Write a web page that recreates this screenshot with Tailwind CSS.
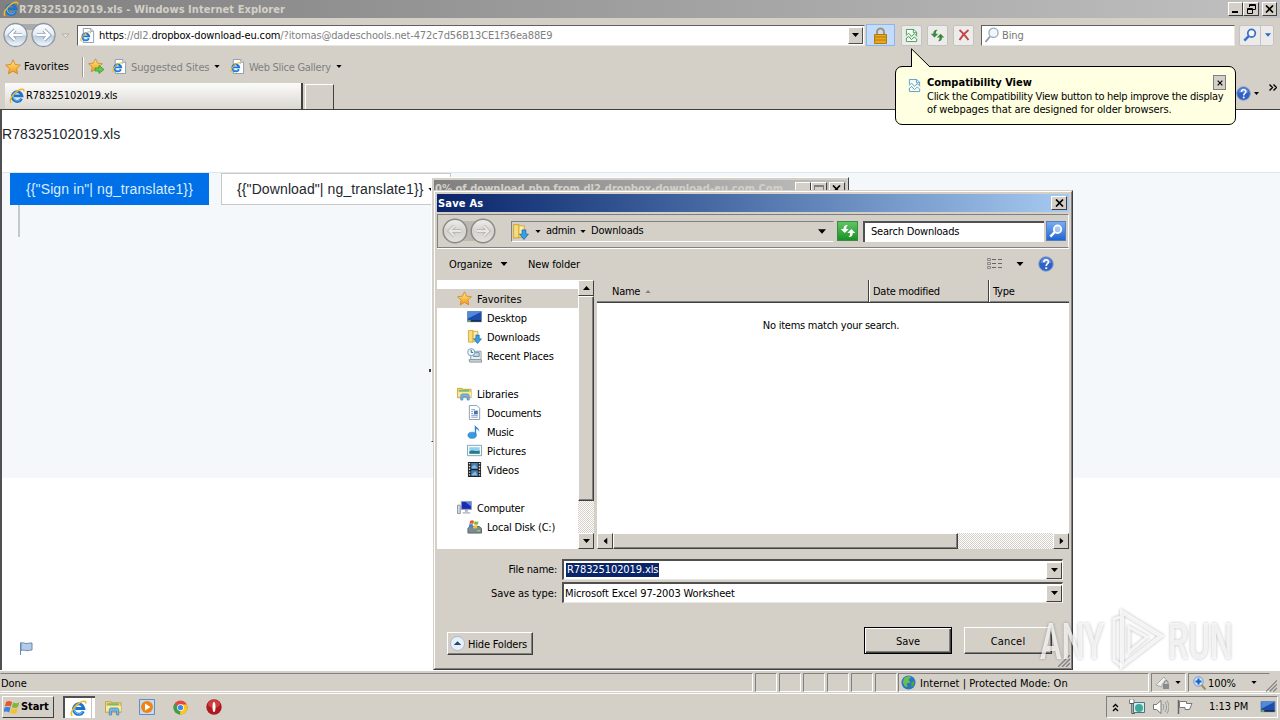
<!DOCTYPE html>
<html lang="en">

<head>
  <meta charset="UTF-8">
  <title>R78325102019.xls - Windows Internet Explorer</title>
  <meta name="viewport" content="width=device-width, initial-scale=1.0">
  <script src="https://cdn.jsdelivr.net/npm/@tailwindcss/browser@4"></script>
</head>

<body class="relative w-[1280px] h-[720px] overflow-hidden flex flex-col bg-[#d4d0c8] text-black font-['DejaVu_Sans_Condensed','Noto_Sans',sans-serif] text-[11px] leading-[14px] tracking-[-0.1px] whitespace-nowrap">

  <!-- Shared icons -->
  <svg class="absolute size-0">
    <defs>
      <linearGradient id="ball" x1="0" y1="0" x2="0" y2="1">
        <stop offset="0" stop-color="#fff" /><stop offset=".5" stop-color="#e3eaf2" /><stop offset=".55" stop-color="#bccbdc" /><stop offset="1" stop-color="#f4f9ff" />
      </linearGradient>
      <linearGradient id="gball" x1="0" y1="0" x2="0" y2="1">
        <stop offset="0" stop-color="#eee" /><stop offset=".5" stop-color="#d5d3cf" /><stop offset="1" stop-color="#e4e2de" />
      </linearGradient>
      <linearGradient id="gold" x1="0" y1="0" x2="0" y2="1">
        <stop offset="0" stop-color="#ffe98a" /><stop offset="1" stop-color="#f09a1a" />
      </linearGradient>
      <symbol id="ie" viewBox="0 0 16 16">
        <path d="M12.6 10.6A4.9 4.9 0 1 1 13 7.9H5" fill="none" stroke="#1c74cf" stroke-width="2.8" />
        <path d="M12 10.8A4.2 4.2 0 0 1 4.2 8" fill="none" stroke="#5db9f5" stroke-width="1" />
        <path d="M2.2 14.8C-.6 13 3.5 5.8 9 2.6c3.600-2 6.300-1.900 5.800.7" fill="none" stroke="#eeb72c" stroke-width="1.500" />
      </symbol>
      <symbol id="iepage" viewBox="0 0 16 16">
        <path d="M3.500.5h8l3 3v12h-11z" fill="#fff" stroke="#8a9bb0" />
        <path d="M11.500.5v3h3" fill="#dce6f2" stroke="#8a9bb0" />
        <use href="#ie" x="0" y="3" width="12" height="12" />
      </symbol>
      <symbol id="star" viewBox="0 0 16 16">
        <path d="M8 .8l2.200 4.700 5.200.6-3.900 3.500 1.100 5.200L8 12.200l-4.600 2.600 1.100-5.200L.6 6.100l5.200-.6z" fill="url(#gold)" stroke="#d9871c" stroke-width=".9" />
      </symbol>
      <symbol id="down" viewBox="0 0 7 4"><path d="M0 0h7L3.500 4z" /></symbol>
      <symbol id="xmark" viewBox="0 0 9 8"><path d="M1 .5l7 7M8 .5l-7 7" stroke="#000" stroke-width="1.700" /></symbol>
      <symbol id="torn" viewBox="0 0 14 16">
        <path d="M1.500 7V1.500h8l3 3V8M1.500 11v3.500h11V12" fill="#f4fff6" stroke="currentColor" />
        <path d="M9 1.500V5h3.500M1 8l3-2.500 3 3.500 3-3 3 3M1 11.500L4 9l3 3.500 3-3 3 3" fill="none" stroke="currentColor" />
      </symbol>
      <symbol id="swap" viewBox="0 0 16 16">
        <path d="M8 2C5.500 1.500 3.500 3 3.500 6H.8l4 4 4-4H6.200C6.200 4 6.800 3 8 2zM8.500 14c2.500.5 4.300-1 4.300-4h2.500l-4-4-4 4h2.800c0 2-.4 3-1.600 4z" fill="currentColor" />
      </symbol>
      <symbol id="lens" viewBox="0 0 16 16">
        <circle cx="9.800" cy="6" r="4.300" fill="#fff" fill-opacity=".5" stroke="currentColor" stroke-width="2" />
        <path d="M6.500 9.300L1.500 14.500" stroke="currentColor" stroke-width="2.800" />
      </symbol>
      <symbol id="help" viewBox="0 0 16 16">
        <circle cx="8" cy="8" r="7.300" fill="#2f62c4" stroke="#8fa4cf" />
        <path d="M2.500 7a5.500 5.500 0 0 1 11 0z" fill="#7aa2e6" opacity=".6" />
        <path d="M5.800 6.300c0-3.200 4.700-3 4.700-.3C10.500 7.800 8.200 7.700 8.200 10" fill="none" stroke="#fff" stroke-width="1.700" />
        <path d="M7.300 11.300h1.900v1.800H7.300z" fill="#fff" />
      </symbol>
      <symbol id="folderdl" viewBox="0 0 16 16">
        <path d="M1.500 1.500h5v12.500h-5z" fill="#f7dc7d" stroke="#d6ab3d" />
        <path d="M6.500 2.500h5v11h-5z" fill="#fcecab" stroke="#d6ab3d" />
        <path d="M9.500 6.500h3.500v4h2.400l-4.100 5-4.200-5h2.400z" fill="#38a0e4" stroke="#1d6db4" stroke-width=".8" />
      </symbol>
      <symbol id="library" viewBox="0 0 16 16">
        <path d="M.5 2.500h5l1 1h8.500v9H.5z" fill="#f5d877" stroke="#c9a545" />
        <path d="M2 4h11v2H2z" fill="#74bd62" /><path d="M1 6.500h14v5H1z" fill="#fbe9a2" />
        <path d="M4 15v-4.500c0-1.500 1-2 2-2h5c1 0 2 .5 2 2V15h-2.200v-3.500H6.200V15z" fill="#75b8e6" stroke="#4180b8" stroke-width=".7" />
      </symbol>
      <symbol id="screen" viewBox="0 0 16 14">
        <path d="M.5.500h15v11H.5z" fill="#1d4da8" stroke="#6287b8" />
        <path d="M1 1h14L1 8z" fill="#4f8adb" /><path d="M1 10h14v1.500H1z" fill="#16243e" /><path d="M1 10h3v1.500H1z" fill="#8fd15c" />
      </symbol>
      <symbol id="win" viewBox="0 0 16 16">
        <path d="M2 3c2-1.300 4-1.200 6 0L6.800 7.700c-2-1.200-4-1.200-6 0z" fill="#e9562a" />
        <path d="M9 3.500c2 1 4 1 6.300-.2L14 8c-2 1.200-4 1.200-6.200.2z" fill="#7fb83a" />
        <path d="M.5 8.700c2-1.200 4-1.200 6 0L5.200 13.500c-2-1.200-4-1.200-6 0z" fill="#3d83da" />
        <path d="M7.500 9.200c2 1.100 4.100 1.100 6.200-.1l-1.200 4.800c-2 1.200-4 1.200-6.200.1z" fill="#f6c12c" />
      </symbol>
      <pattern id="dots" width="2" height="2" patternUnits="userSpaceOnUse"><path d="M0 0h2v2H0z" fill="#d4d0c8" /><path d="M0 0h1v1H0zM1 1h1v1H1z" fill="#fff" /></pattern>
    </defs>
  </svg>

  <!-- Title Bar -->
  <header class="h-[18px] shrink-0 flex items-center justify-between bg-linear-to-r from-[#808080] to-[#c0c0c0] pl-[3px] pr-[3px]">
    <div class="flex items-center">
      <svg class="size-4"><use href="#ie" /></svg>
      <span class="font-bold text-[#d4d0c8] tracking-[0.06px] pt-px">R78325102019.xls - Windows Internet Explorer</span>
    </div>
    <div class="flex">
      <button class="w-[15px] h-[14px] bg-[#d4d0c8] border border-t-white border-l-white border-r-[#404040] border-b-[#404040] flex items-end pl-[3px] pb-[2px]"><span class="w-[6px] h-[2px] bg-black"></span></button>
      <button class="w-[16px] h-[14px] bg-[#d4d0c8] border border-t-white border-l-white border-r-[#404040] border-b-[#404040] flex items-center justify-center"><svg class="w-[9px] h-[10px]" viewBox="0 0 9 10" fill="none" stroke="#000"><path d="M2.500 3V.5h6v5H6M2 1.500h7M.5 4.500h5v5h-5zM0 5.500h6" /></svg></button>
      <button class="ml-[3px] w-[15px] h-[14px] bg-[#d4d0c8] border border-t-white border-l-white border-r-[#404040] border-b-[#404040] flex items-center justify-center"><svg class="w-[9px] h-2"><use href="#xmark" /></svg></button>
    </div>
  </header>

  <!-- Navigation -->
  <nav class="h-[34px] shrink-0 flex items-center pl-[2px]">
    <svg class="w-[70px] h-7 shrink-0" viewBox="0 0 70 28">
      <path d="M10 3h36l-4 6H14z" fill="#aaa" />
      <circle cx="13.500" cy="14" r="11.500" fill="url(#ball)" stroke="#8795a6" stroke-width="1.300" />
      <circle cx="41.500" cy="14" r="11.500" fill="url(#ball)" stroke="#8795a6" stroke-width="1.300" />
      <path d="M20 14H8m5-5l-5 5 5 5M35 14h12m-5-5l5 5-5 5" fill="none" stroke="#8ba0b8" stroke-width="4" />
      <path d="M20 14H8m5-5l-5 5 5 5M35 14h12m-5-5l5 5-5 5" fill="none" stroke="#fff" stroke-width="2.400" />
      <path d="M60 13h7l-3.500 3.500z" fill="#e8e6e0" stroke="#aaa69e" stroke-width=".8" />
    </svg>
    <div class="ml-[5px] w-[788px] h-[21px] flex items-center bg-white border border-t-[#606060] border-l-[#606060] border-r-[#e8e6e0] border-b-[#e8e6e0] pl-[2px] pr-px text-[#808080]">
      <svg class="size-[15px]"><use href="#iepage" /></svg>
      <span class="ml-1 pt-[2px] tracking-[-0.13px]"><span class="text-black">https</span>://dl2.<span class="text-black">dropbox-download-eu.com</span>/?itomas@dadeschools.net-472c7d56B13CE1f36ea88E9</span>
      <span class="ml-auto w-[15px] h-[17px] bg-[#d4d0c8] border border-t-white border-l-white border-r-[#505050] border-b-[#505050] flex items-center justify-center"><svg class="w-[7px] h-1"><use href="#down" /></svg></span>
    </div>
    <div class="ml-px w-[29px] h-[22px] bg-[#c3dcfb] border border-[#8fb6e8] flex items-center justify-center">
      <svg class="w-[15px] h-[17px]" viewBox="0 0 15 17"><path d="M4 8V5a3.500 3.500 0 0 1 7 0v3" fill="none" stroke="#a09674" stroke-width="2" /><path d="M1.500 7.500h12v9h-12z" fill="#e8a91e" stroke="#b5780c" /><path d="M2 10h11M2 13h11" stroke="#b9790d" /></svg>
    </div>
    <div class="ml-[6px] flex gap-[5px]">
      <div class="w-[21px] h-[21px] bg-[#ececea] border border-[#c2c2c0] rounded-[2px] flex items-center justify-center text-[#459a56]"><svg class="w-[13px] h-[15px]"><use href="#torn" /></svg></div>
      <div class="w-[21px] h-[21px] bg-[#ececea] border border-[#c2c2c0] rounded-[2px] flex items-center justify-center text-[#3d8a3e]"><svg class="size-[15px]"><use href="#swap" /></svg></div>
      <div class="w-[21px] h-[21px] bg-[#ececea] border border-[#c2c2c0] rounded-[2px] flex items-center justify-center"><svg class="size-3" viewBox="0 0 12 12"><path d="M1.500 1c3 2.500 6 6 9 10M10.500 1C7 3.500 4 7 1.500 11" fill="none" stroke="#c5444a" stroke-width="2" /></svg></div>
    </div>
    <div class="ml-[7px] w-[254px] h-[21px] bg-white border border-t-[#606060] border-l-[#606060] border-r-[#e8e6e0] border-b-[#e8e6e0] flex items-center pl-[2px] text-[#777]">
      <svg class="size-4" viewBox="0 0 16 16"><circle cx="9.500" cy="5.800" r="4.600" fill="#f0f7fc" stroke="#9aabba" stroke-width="1.300" /><path d="M6 9.500L1.500 15" stroke="#8f979e" stroke-width="1.800" /></svg>
      <span class="ml-[2px] pt-[2px]">Bing</span>
    </div>
    <div class="ml-1 w-[35px] h-[21px] bg-[#ecebea] border border-[#c2c2c8] rounded-[2px] flex items-center">
      <svg class="ml-[3px] w-[14px] h-[14px] text-[#3570cc]"><use href="#lens" /></svg>
      <span class="ml-[3px] h-full w-px bg-[#c2c2c8]"></span>
      <svg class="ml-[4px] w-[6px] h-1 fill-[#2a69c4]"><use href="#down" /></svg>
    </div>
  </nav>

  <!-- Favorites Bar -->
  <div class="h-[30px] shrink-0 flex items-center pl-[5px] pb-px text-[#808080]">
    <svg class="size-4"><use href="#star" /></svg>
    <span class="ml-[3px] w-[46px] text-black tracking-[0.05px]">Favorites</span>
    <span class="ml-3 w-px h-5 bg-[#9c9a94]"></span><span class="w-px h-5 bg-white"></span>
    <svg class="ml-[4px] size-[17px]" viewBox="0 0 17 17"><use href="#star" width="15" height="15" /><path d="M7 10h4V7.500l5 4-5 4V13H7z" fill="#5fca4c" stroke="#3b9a31" stroke-width=".8" /></svg>
    <svg class="ml-[7px] size-[15px]"><use href="#iepage" /></svg>
    <span class="ml-1 w-[78px] pt-[2px]">Suggested Sites</span>
    <svg class="ml-[5px] w-[6px] h-[3px]" fill="#000"><use href="#down" /></svg>
    <svg class="ml-[10px] size-[15px]"><use href="#iepage" /></svg>
    <span class="ml-1 w-[82px] pt-[2px] tracking-[-0.27px]">Web Slice Gallery</span>
    <svg class="ml-[5px] w-[6px] h-[3px]" fill="#000"><use href="#down" /></svg>
  </div>

  <!-- Tab Row -->
  <div class="h-[28px] shrink-0 flex items-end pl-[5px] border-b border-[#404040]">
    <div class="w-[298px] h-[26px] flex items-center pl-[4px] bg-linear-to-b from-[#fbfbfa] to-[#dbd8d2] border-r-2 border-[#404040]">
      <svg class="size-4"><use href="#ie" /></svg>
      <span class="ml-px">R78325102019.xls</span>
    </div>
    <div class="ml-[2px] w-[29px] h-[25px] border-t border-l border-white border-r-[#404040] border-r"></div>
    <div class="ml-auto flex items-center self-start pt-1 pr-[3px]">
      <svg class="size-[15px]"><use href="#help" /></svg>
      <svg class="ml-[3px] w-[5px] h-[3px]"><use href="#down" /></svg>
      <svg class="ml-[10px] -mt-3 w-[8px] h-[7px]" viewBox="0 0 8 7"><path d="M.5.500l3 3-3 3M4.500.500l3 3-3 3" fill="none" stroke="#000" stroke-width="1.400" /></svg>
    </div>
  </div>

  <!-- Page -->
  <main class="h-[560px] shrink-0 bg-white border-l-2 border-[#505050] flex flex-col font-['Liberation_Sans',sans-serif] text-[14px] text-[#24282e]">
    <p class="h-[62px] shrink-0 pt-[17px] tracking-[0.1px]">R78325102019.xls</p>
    <section class="h-[306px] shrink-0 bg-[#f5f8fb] border-t border-[#e2e6ea] pl-2">
      <div class="flex gap-3">
        <button class="w-[199px] h-8 bg-[#0070e8] text-[#d9ecff] tracking-[0.11px]">{{"Sign in"| ng_translate1}}</button>
        <button class="w-[230px] h-8 bg-white border border-[#c8c8c8] pl-[15px] text-left flex items-center tracking-[0.11px]">{{"Download"| ng_translate1}}<svg class="ml-[5px] w-[6px] h-[3px]"><use href="#down" /></svg></button>
      </div>
      <div class="ml-2 w-[2px] h-8 bg-[#c4c8cc]"></div>
    </section>
    <svg class="mt-[163px] ml-[17px] w-[14px] h-[15px]" viewBox="0 0 14 15"><path d="M1.500 14V1.500" stroke="#6787b2" /><path d="M2 2c2-1 3.500.5 5 .5S10.500 2 13 2v7c-2.500 0-3.500.7-5 .7S4 8.500 2 9.500z" fill="#b3cbe6" stroke="#6787b2" /></svg>
  </main>

  <!-- Status Bar -->
  <div class="h-[23px] shrink-0 flex items-end pb-px border-t border-white">
    <div class="w-[753px] h-[19px] pt-[2px] border border-t-[#808080] border-l-transparent border-r-white border-b-white flex items-center">Done</div>
    <div class="ml-[2px] flex gap-[2px]">
      <span class="w-[22px] h-[19px] border border-t-[#808080] border-l-[#808080] border-r-white border-b-white"></span>
      <span class="w-[22px] h-[19px] border border-t-[#808080] border-l-[#808080] border-r-white border-b-white"></span>
      <span class="w-[22px] h-[19px] border border-t-[#808080] border-l-[#808080] border-r-white border-b-white"></span>
      <span class="w-[22px] h-[19px] border border-t-[#808080] border-l-[#808080] border-r-white border-b-white"></span>
      <span class="w-[22px] h-[19px] border border-t-[#808080] border-l-[#808080] border-r-white border-b-white"></span>
      <span class="w-[22px] h-[19px] border border-t-[#808080] border-l-[#808080] border-r-white border-b-white"></span>
    </div>
    <div class="ml-[1px] w-[251px] h-[19px] border border-t-[#808080] border-l-[#808080] border-r-white border-b-white flex items-center pl-[2px]">
      <svg class="size-[15px]" viewBox="0 0 16 16"><circle cx="8" cy="8" r="7.500" fill="#2b76c4" /><path d="M3 4c2-3 6-3 8-2l-3 3 2 3-4 1 1 4-3-1-2-4z" fill="#69c04e" /><path d="M11 8l3-2v5l-3 2z" fill="#4da63c" /></svg>
      <span class="ml-[4px] pt-[2px] tracking-[0.03px]">Internet | Protected Mode: On</span>
    </div>
    <div class="ml-[2px] w-[35px] h-[19px] border border-t-[#808080] border-l-[#808080] border-r-white border-b-white flex items-center pl-[3px]">
      <svg class="w-[16px] h-[14px]" viewBox="0 0 16 14"><path d="M1 9l8-8 3 4-5 3v3z" fill="#f0f0ee" stroke="#aaa" /><path d="M9 8V6.500a2 2 0 0 1 4 0V8" fill="none" stroke="#888" /><path d="M8 8h6v5H8z" fill="#8a8a8a" /></svg>
      <svg class="ml-1 w-[6px] h-[3px]"><use href="#down" /></svg>
    </div>
    <div class="ml-[2px] w-[82px] h-[19px] border border-t-[#808080] border-l-[#808080] border-r-transparent border-b-white flex items-center pl-[4px]">
      <svg class="w-[13px] h-[14px]" viewBox="0 0 13 14"><path d="M8.500 9l4 4.500" stroke="#a08b5a" stroke-width="2" /><circle cx="5.500" cy="5.500" r="4.700" fill="#cfe6fb" stroke="#6c96cc" /><path d="M5.500 2.500v6M2.500 5.500h6" stroke="#1a5bc2" stroke-width="2" /></svg>
      <span class="ml-[2px] w-[30px] pt-[2px]">100%</span>
      <svg class="ml-[13px] w-[6px] h-[3px]"><use href="#down" /></svg>
    </div>
    <svg class="w-[11px] h-3 shrink-0 -ml-1" viewBox="0 0 12 12"><path d="M0 12L12 0M4 12l8-8M8 12l4-4" stroke="#808080" stroke-width="1.300" /></svg>
  </div>

  <!-- Taskbar -->
  <footer class="h-[27px] shrink-0 flex items-center pl-[2px] pr-[2px] border-t border-white">
    <button class="w-[52px] h-[22px] border border-t-white border-l-white border-r-[#404040] border-b-[#404040] flex items-center pl-px"><svg class="size-4 overflow-visible"><use href="#win" /></svg><span class="ml-[1px] font-bold">Start</span></button>
    <div class="ml-[9px] w-[32px] h-[22px] border-t-2 border-l-2 border-[#505050] bg-white flex items-center pl-[5px]"><svg class="size-[17px]"><use href="#ie" /></svg><span class="ml-auto mr-[3px] w-px h-full bg-[#c9c5bd]"></span></div>
    <svg class="ml-[10px] size-[17px]"><use href="#library" /></svg>
    <svg class="ml-[17px] size-[16px]" viewBox="0 0 16 16"><path d="M.5.500h15v15H.5z" fill="#c6dcf2" stroke="#5b8fc6" /><circle cx="8" cy="8" r="6" fill="#ee8512" /><path d="M6 4.500L11.500 8 6 11.500z" fill="#fff" /></svg>
    <svg class="ml-[18px] size-[15px]" viewBox="0 0 16 16"><circle cx="8" cy="8" r="7.500" fill="#e2483b" /><path d="M8 8L1.500 4.300A7.500 7.500 0 0 0 8 15.500z" fill="#35a24f" /><path d="M8 8h7.500A7.500 7.500 0 0 1 7.500 15.500z" fill="#fbc919" /><path d="M8 4.800h6.800A7.500 7.500 0 0 1 15.500 8L8 9z" fill="#fbc919" /><circle cx="8" cy="8" r="3.600" fill="#fff" /><circle cx="8" cy="8" r="2.800" fill="#4482ec" /></svg>
    <svg class="ml-[18px] size-[16px]" viewBox="0 0 16 16"><circle cx="8" cy="8" r="7.700" fill="#b01820" /><ellipse cx="8" cy="5" rx="6" ry="4" fill="#e35a58" opacity=".6" /><ellipse cx="8" cy="8" rx="1.500" ry="5" fill="#fff" /></svg>
    <div class="ml-auto w-[172px] h-[22px] border border-t-[#808080] border-l-[#808080] border-r-white border-b-white flex items-center pl-[5px]">
      <svg class="w-[7px] h-[9px]" viewBox="0 0 7 9"><path d="M1 4l2.500-2.500L6 4M1 8l2.500-2.500L6 8" fill="none" stroke="#000" stroke-width="1.300" /></svg>
      <svg class="ml-[10px] size-4" viewBox="0 0 16 16"><path d="M4.500 3.500h11v10h-11z" fill="#d8ecf0" stroke="#47777e" /><circle cx="10" cy="9" r="4" fill="#3fa89b" /><path d="M.8.500v4h4v-4M2.800 4.500v10h3" fill="none" stroke="#555" /><path d="M1 1h3.500v3H1z" fill="#fff" /></svg>
      <svg class="ml-[8px] size-[16px]" viewBox="0 0 16 16" fill="none" stroke="#777"><path d="M.5 5.500h3L8 1.500v13l-4.500-4h-3z" fill="#fff" /><path d="M10 5c1 2 1 4 0 6M12 3c2 3 2 7 0 10M14 1.500c2.500 4 2.500 9 0 13" stroke="#999" /></svg>
      <svg class="ml-[8px] size-[16px]" viewBox="0 0 16 16"><path d="M1.500 1v14" stroke="#666" stroke-width="1.500" /><path d="M2.500 2.500h7v2h5.500l-2.500 6H8v-2H2.500z" fill="#fff" stroke="#777" /></svg>
      <span class="ml-[16px] w-[41px]">1:13 PM</span>
      <svg class="ml-[10px] w-[16px] h-[13px]"><use href="#screen" /></svg>
    </div>
  </footer>

  <!-- Download progress window, behind the dialog -->
  <span class="absolute left-[429px] top-[369px] w-[2px] h-[3px] bg-[#404040]"></span>
  <div class="absolute left-[431px] top-[177px] w-[418px] h-[265px] bg-[#d4d0c8] border border-l-white border-t-white border-r-[#404040] border-b-[#404040] p-[2px]">
    <div class="h-[18px] bg-linear-to-r from-[#808080] to-[#c0c0c0] flex items-center justify-between pl-px pr-[2px] font-bold text-[#d4d0c8]">
      <span class="tracking-[0.06px]">0% of download.php from dl2.dropbox-download-eu.com Com...</span>
      <div class="flex">
        <span class="w-4 h-[14px] bg-[#d4d0c8] border border-t-white border-l-white border-r-[#404040] border-b-[#404040]"></span>
        <span class="w-4 h-[14px] bg-[#d4d0c8] border border-t-white border-l-white border-r-[#404040] border-b-[#404040] p-[2px]"><span class="block h-[9px] border border-t-2 border-[#808080]"></span></span>
        <span class="ml-[2px] w-4 h-[14px] bg-[#d4d0c8] border border-t-white border-l-white border-r-[#404040] border-b-[#404040] flex items-center justify-center"><svg class="w-[9px] h-2"><use href="#xmark" /></svg></span>
      </div>
    </div>
  </div>

  <!-- Save As dialog -->
  <div class="absolute left-[433px] top-[190px] w-[640px] h-[480px] bg-[#d4d0c8] border border-t-[#d4d0c8] border-l-[#d4d0c8] border-r-[#404040] border-b-[#404040]">
    <div class="h-full border border-t-white border-l-white border-r-[#808080] border-b-[#808080] pt-[2px] px-[2px] flex flex-col">
      <div class="h-[18px] shrink-0 bg-linear-to-r from-[#0a246a] to-[#a6caf0] flex items-center justify-between pl-px pr-[2px]">
        <span class="font-bold text-white pt-px tracking-[0.2px]">Save As</span>
        <span class="w-4 h-[14px] bg-[#d4d0c8] border border-t-white border-l-white border-r-[#404040] border-b-[#404040] flex items-center justify-center"><svg class="w-[9px] h-2"><use href="#xmark" /></svg></span>
      </div>

      <!-- Path and search -->
      <div class="mt-[2px] h-[34px] shrink-0 border border-[#808080] border-r-white border-b-[#808080] shadow-[0_1px_0_#fff] flex items-center pl-[3px]">
        <svg class="w-[56px] h-7" viewBox="0 0 56 28">
          <path d="M12 4h30v20H12z" fill="#bbb8b2" />
          <circle cx="14" cy="14" r="11.800" fill="url(#gball)" stroke="#8c8a86" stroke-width="1.500" />
          <circle cx="42" cy="14" r="11.800" fill="url(#gball)" stroke="#8c8a86" stroke-width="1.500" />
          <path d="M20 14H8.500m5-5l-5 5 5 5M36 14h11.500m-5-5l5 5-5 5" fill="none" stroke="#b4b1ab" stroke-width="3.500" />
          <path d="M20 14H8.500m5-5l-5 5 5 5M36 14h11.500m-5-5l5 5-5 5" fill="none" stroke="#e9e7e4" stroke-width="2" />
        </svg>
        <div class="ml-[14px] w-[323px] h-[21px] border border-t-[#808080] border-l-[#808080] border-r-transparent border-b-white flex items-center">
          <svg class="size-[17px]"><use href="#folderdl" /></svg>
          <svg class="ml-[6px] w-[6px] h-[3px]"><use href="#down" /></svg>
          <span class="ml-[5px] w-[28px] tracking-[-0.3px]">admin</span>
          <svg class="ml-[6px] w-[6px] h-[3px]"><use href="#down" /></svg>
          <span class="ml-[5px] tracking-[-0.2px]">Downloads</span>
          <svg class="ml-auto mr-[7px] w-[8px] h-[5px]"><use href="#down" /></svg>
        </div>
        <div class="ml-[3px] w-[21px] h-5 bg-linear-to-b from-[#5dc564] to-[#139322] border border-[#3c8b45] flex items-center justify-center text-white"><svg class="size-4"><use href="#swap" /></svg></div>
        <div class="ml-[5px] w-[181px] h-[21px] bg-white border-t-2 border-l-2 border-t-[#505050] border-l-[#505050] flex items-center pl-[6px] tracking-[-0.2px]">Search Downloads</div>
        <div class="ml-[2px] w-[20px] h-5 bg-linear-to-b from-[#7aabf0] to-[#1c65d4] border border-[#5580bd] flex items-center justify-center text-white"><svg class="size-[14px]"><use href="#lens" /></svg></div>
      </div>

      <!-- Toolbar -->
      <div class="h-[32px] shrink-0 flex items-center pl-[12px] pr-[15px] tracking-[-0.15px]">
        <span class="w-[43px] pt-px">Organize</span>
        <svg class="ml-[8px] w-[8px] h-1"><use href="#down" /></svg>
        <span class="ml-[20px] pt-px">New folder</span>
        <svg class="ml-auto w-[15px] h-3" viewBox="0 0 15 12" fill="none" stroke="#666"><path d="M.5.500h3v2h-3zM.5 4.500h3v2h-3zM.5 8.500h3v2h-3z" stroke="#888" /><path d="M5 1.500h4M11 1.500h4M5 5.500h4M11 5.500h4M5 9.500h4M11 9.500h4" /></svg>
        <svg class="ml-[14px] w-[8px] h-1"><use href="#down" /></svg>
        <svg class="ml-[14px] size-4"><use href="#help" /></svg>
      </div>

      <!-- Folder tree and file list -->
      <div class="h-[269px] shrink-0 flex">
        <div class="w-[141px] shrink-0 bg-white pt-[9px] tracking-[-0.15px]">
          <ul class="[&>li]:h-[19px] [&>li]:flex [&>li]:items-center [&>li]:pl-[30px] [&_svg]:mr-[5px] [&>li>span]:pt-[2px]">
            <li class="bg-[#d4d0c8] pl-5!"><svg class="size-[15px]"><use href="#star" /></svg><span class="tracking-[0px]">Favorites</span></li>
            <li><svg class="w-[15px] h-[13px]"><use href="#screen" /></svg><span>Desktop</span></li>
            <li><svg class="size-[15px]"><use href="#folderdl" /></svg><span>Downloads</span></li>
            <li><svg class="size-[15px]" viewBox="0 0 16 16"><path d="M4 3.500h11v9H4z" fill="#e8eef2" stroke="#8f9ba3" /><path d="M7 5h6v4H7z" fill="#c1dcec" stroke="#6e8899" /><path d="M2 12.500h13l1 2.500H3z" fill="#d6dee2" stroke="#81909a" /><circle cx="4.500" cy="4.500" r="3.800" fill="#eef6fb" stroke="#6c9dbf" /><path d="M4.500 2v2.700h2" stroke="#456" fill="none" /></svg><span>Recent Places</span></li>
            <li></li>
            <li class="pl-5!"><svg class="size-[15px]"><use href="#library" /></svg><span>Libraries</span></li>
            <li><svg class="size-[15px]" viewBox="0 0 16 16"><path d="M2.500.500h8l3 3v12h-11z" fill="#fff" stroke="#879cb2" /><path d="M4.500 5h4M4.500 7h2M4.500 9h2M4.500 11h7M4.500 13h7" stroke="#7a99c0" /><path d="M7.500 6h4v4h-4z" fill="#3b76b8" /></svg><span class="tracking-[-0.25px]">Documents</span></li>
            <li><svg class="size-[15px]" viewBox="0 0 16 16"><ellipse cx="5.500" cy="12" rx="4.500" ry="3.300" fill="#3c9ae0" stroke="#2877b8" stroke-width=".6" /><path d="M8.300 12V.5c.7 3 5.200 3.300 4.800 8-.8-2.500-2-3-3.300-3.300V12z" fill="#2e87d0" /></svg><span class="tracking-[-0.3px]">Music</span></li>
            <li><svg class="size-[15px]" viewBox="0 0 16 16"><path d="M.5 2.500h15v11H.5z" fill="#f8fafc" stroke="#7da0bd" /><path d="M2.500 4.500h11v7h-11z" fill="#8fd0f2" /><path d="M2.500 9c3-2.500 6 1 11-1v3.500h-11z" fill="#267c7d" /></svg><span class="tracking-[0px]">Pictures</span></li>
            <li><svg class="size-[15px]" viewBox="0 0 16 16"><path d="M1 0h14v16H1z" fill="#222" /><path d="M4.500 1h7v6.300h-7zM4.500 8.700h7V15h-7z" fill="#3d80bd" /><path d="M5 5l3-2 3 3v1H5zM5 13l4-3 2 4H5z" fill="#8bb8d6" /><path d="M2.700 1v15M13.300 1v15" stroke="#ddd" stroke-width="1.500" stroke-dasharray="1.500 1.500" /></svg><span>Videos</span></li>
            <li></li>
            <li class="pl-5!"><svg class="size-[15px]" viewBox="0 0 16 16"><path d="M.5 5.500h3v9h-3z" fill="#d7dbe0" stroke="#8c959f" /><path d="M4.500 1.500h11v8.500h-11z" fill="#1a2cb0" stroke="#9ba7b8" /><path d="M9 2h6v5z" fill="#5b80ea" /><path d="M8.500 10.500h3v2h-3zM6 13h8v1.500H6z" fill="#a8aeb6" /></svg><span class="tracking-[-0.25px]">Computer</span></li>
            <li><svg class="size-[15px]" viewBox="0 0 16 16"><path d="M1 10l2-2h10l2.500 2v5H1z" fill="#7c8b94" stroke="#56636b" /><path d="M11 12.500h3" stroke="#7fe05a" stroke-width="1.500" /><use href="#win" x="2" y="0" width="11" height="11" /></svg><span class="tracking-[-0.2px]">Local Disk (C:)</span></li>
          </ul>
        </div>
        <div class="w-[16px] shrink-0 flex flex-col">
          <div class="h-4 bg-[#d4d0c8] border border-t-white border-l-white border-r-[#404040] border-b-[#404040] flex items-center justify-center"><svg class="w-[7px] h-1 rotate-180"><use href="#down" /></svg></div>
          <div class="h-[205px] border border-t-white border-l-white border-r-[#404040] border-b-[#404040] shadow-[inset_-1px_-1px_0_#808080]"></div>
          <svg class="flex-1 w-4 min-h-0"><rect width="16" height="60" fill="url(#dots)" /></svg>
          <div class="h-4 bg-[#d4d0c8] border border-t-white border-l-white border-r-[#404040] border-b-[#404040] flex items-center justify-center"><svg class="w-[7px] h-1"><use href="#down" /></svg></div>
        </div>
        <div class="ml-[3px] flex-1 min-w-0 flex flex-col bg-white">
          <div class="h-[23px] shrink-0 flex bg-[#d4d0c8] border-b border-[#404040] shadow-[inset_0_-1px_0_#808080] tracking-[-0.25px]">
            <div class="w-[272px] shrink-0 pl-[15px] border-r border-[#404040] flex items-center pt-[2px]">Name<svg class="ml-[5px] -mt-[2px] w-[6px] h-[3px] rotate-180 fill-[#808080]"><use href="#down" /></svg></div>
            <div class="w-[120px] shrink-0 pl-[3px] border-l border-l-white border-r border-[#404040] flex items-center pt-[2px]">Date modified</div>
            <div class="flex-1 pl-[3px] border-l border-white flex items-center pt-[2px]">Type</div>
          </div>
          <p class="flex-1 pt-[16px] pr-[4px] text-center tracking-[-0.25px]">No items match your search.</p>
          <div class="h-4 flex">
            <div class="w-4 shrink-0 bg-[#d4d0c8] border border-t-white border-l-white border-r-[#404040] border-b-[#404040] flex items-center justify-center"><svg class="w-[7px] h-1 rotate-90"><use href="#down" /></svg></div>
            <div class="w-[345px] shrink-0 bg-[#d4d0c8] border border-t-white border-l-white border-r-[#404040] border-b-[#404040] shadow-[inset_-1px_-1px_0_#808080]"></div>
            <svg class="flex-1 min-w-0 w-0 h-4"><rect width="120" height="16" fill="url(#dots)" /></svg>
            <div class="w-4 shrink-0 bg-[#d4d0c8] border border-t-white border-l-white border-r-[#404040] border-b-[#404040] flex items-center justify-center"><svg class="w-[7px] h-1 -rotate-90"><use href="#down" /></svg></div>
          </div>
        </div>
      </div>

      <!-- File name and type -->
      <div class="mt-[10px] flex flex-col gap-[2px]">
        <div class="flex items-center">
          <label class="w-[120px] text-right pt-px tracking-[-0.25px]">File name:</label>
          <div class="ml-[5px] w-[501px] h-[21px] bg-white border border-t-2 border-l-2 border-t-[#505050] border-l-[#505050] border-r-white border-b-[#e8e6e0] flex items-center pl-[2px]">
            <span class="h-[14px] bg-[#0a246a] text-white px-px leading-[14px]">R78325102019.xls</span>
            <span class="ml-auto w-4 h-[17px] bg-[#d4d0c8] border border-t-white border-l-white border-r-[#404040] border-b-[#404040] flex items-center justify-center"><svg class="w-[7px] h-1"><use href="#down" /></svg></span>
          </div>
        </div>
        <div class="flex items-center">
          <label class="w-[120px] text-right pt-[2px]">Save as type:</label>
          <div class="ml-[5px] w-[501px] h-[21px] bg-white border border-t-2 border-l-2 border-t-[#505050] border-l-[#505050] border-r-white border-b-[#e8e6e0] flex items-center pl-px">
            <span class="pt-px tracking-[-0.14px]">Microsoft Excel 97-2003 Worksheet</span>
            <span class="ml-auto w-4 h-[17px] bg-[#d4d0c8] border border-t-white border-l-white border-r-[#404040] border-b-[#404040] flex items-center justify-center"><svg class="w-[7px] h-1"><use href="#down" /></svg></span>
          </div>
        </div>
      </div>

      <!-- Buttons -->
      <div class="mt-[24px] flex items-start pl-[10px]">
        <button class="mt-[5px] w-[86px] h-[23px] border border-t-white border-l-white border-r-[#404040] border-b-[#404040] shadow-[inset_-1px_-1px_0_#808080] flex items-center pl-[2px]">
          <svg class="size-[15px]" viewBox="0 0 16 16"><circle cx="8" cy="8" r="7.500" fill="#e7eff9" stroke="#a9b6c6" /><path d="M4 9.500L8 5.500l4 4z" fill="#27466e" /></svg>
          <span class="ml-[3px] pt-[2px] tracking-[-0.2px]">Hide Folders</span>
        </button>
        <button class="ml-[331px] w-[88px] h-[27px] pt-[2px] border border-black shadow-[inset_1px_1px_0_#fff,inset_-1px_-1px_0_#404040,inset_-2px_-2px_0_#808080]">Save</button>
        <button class="ml-3 w-[88px] h-[27px] pt-[2px] border border-t-white border-l-white border-r-[#404040] border-b-[#404040] shadow-[inset_-1px_-1px_0_#808080] tracking-[0.2px]">Cancel</button>
      </div>
      <svg class="absolute right-[2px] bottom-[2px] size-3" viewBox="0 0 12 12"><path d="M0 12L12 0M4 12l8-8M8 12l4-4" stroke="#808080" stroke-width="1.300" /></svg>
    </div>
  </div>

  <!-- Compatibility View balloon -->
  <div class="absolute left-[895px] top-[66px] w-[341px] h-[59px] bg-[#ffffe1] border border-black rounded-[7px] flex pl-3 pt-[9px]">
    <svg class="absolute left-[14px] -top-[19px] w-[24px] h-[20px]" viewBox="0 0 24 20"><path d="M1.500 20V.8L20 19.200V20z" fill="#ffffe1" /><path d="M1.500 19V.8L20 19" fill="none" stroke="#000" /></svg>
    <svg class="mt-[2px] w-[13px] h-[15px] shrink-0 text-[#5a9bd0]"><use href="#torn" /></svg>
    <div class="ml-[6px] leading-[13px]">
      <p class="font-bold tracking-[0px]">Compatibility View</p>
      <p class="pt-px tracking-[-0.27px]">Click the Compatibility View button to help improve the display</p>
      <p class="tracking-[-0.11px]">of webpages that are designed for older browsers.</p>
    </div>
    <span class="absolute right-[9px] top-[8px] w-[13px] h-[15px] bg-[#d4d0c8] border border-[#808080] flex items-center justify-center"><svg class="w-[6px] h-[6px]"><use href="#xmark" /></svg></span>
  </div>

  <!-- Watermark -->
  <svg class="absolute left-[1030px] top-[600px] w-[250px] h-[80px] drop-shadow-[0_0_1.500px_rgba(0,0,0,0.35)]" viewBox="0 0 250 80">
    <g fill="#fff" fill-opacity=".75" font-family="Roboto, sans-serif" font-size="50" font-weight="500" letter-spacing="0">
      <text x="10" y="59" textLength="64" lengthAdjust="spacingAndGlyphs">ANY</text>
      <text x="138" y="59" textLength="65" lengthAdjust="spacingAndGlyphs">RUN</text>
    </g>
    <g fill="none" stroke="#fff" stroke-opacity=".8" stroke-width="4">
      <path d="M92 12l39 24-39 30z" />
      <path d="M90 17l-6 2v41l8 6M99 27l18 10-18 15z" stroke-width="3" />
    </g>
  </svg>

</body>

</html>
